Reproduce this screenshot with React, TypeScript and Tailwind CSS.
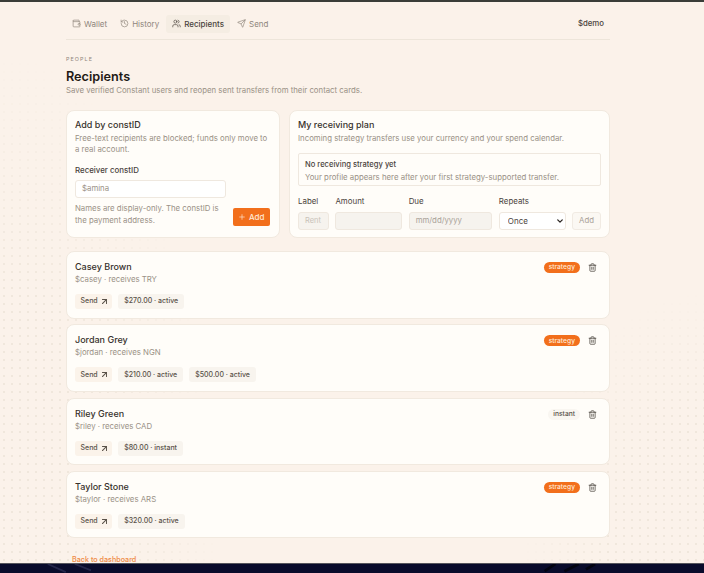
import { ArrowUpRight, ChevronDown, History, Plus, Send, Trash2, Users, Wallet } from 'lucide-react'

const navItems = [
  { label: 'Wallet', icon: Wallet, active: false },
  { label: 'History', icon: History, active: false },
  { label: 'Recipients', icon: Users, active: true },
  { label: 'Send', icon: Send, active: false },
]

const recipients = [
  { name: 'Casey Brown', sub: '$casey · receives TRY', badge: 'strategy', chips: ['$270.00 · active'] },
  { name: 'Jordan Grey', sub: '$jordan · receives NGN', badge: 'strategy', chips: ['$210.00 · active', '$500.00 · active'] },
  { name: 'Riley Green', sub: '$riley · receives CAD', badge: 'instant', chips: ['$80.00 · instant'] },
  { name: 'Taylor Stone', sub: '$taylor · receives ARS', badge: 'strategy', chips: ['$320.00 · active'] },
]

function RecipientCard({ name, sub, badge, chips }: (typeof recipients)[0]) {
  return (
    <div className="flex h-[67.5px] justify-between rounded-[8px] border border-[#f1e9df] bg-[#fffdf9] pl-2 pr-[12px] pt-[9px]">
      <div>
        <div className="text-[9px] leading-[12px] font-medium text-[#38322c]">{name}</div>
        <div className="mt-[1px] text-[7.8px] leading-[11px] text-[#9a9186]">{sub}</div>
        <div className="mt-[9px] flex gap-[6px]">
          <span className="flex h-[15px] items-center gap-[4px] rounded-[3px] bg-[#fbf3ea] px-[5.5px] text-[7px] font-medium text-[#5a5249]">
            Send
            <ArrowUpRight className="h-[5px] w-[5px]" viewBox="6 6 12 12" strokeWidth={2.6} />
          </span>
          {chips.map(chip => (
            <span key={chip} className="flex h-[15px] items-center rounded-[3px] bg-[#f8f4ee] px-[6px] text-[7px] font-medium text-[#5a5249]">
              {chip}
            </span>
          ))}
        </div>
      </div>
      <div className="flex h-[13px] items-center gap-[8px]">
        {badge === 'strategy' ? (
          <span className="flex h-[11px] items-center rounded-full bg-[#f26f1c] px-[5px] text-[6.7px] font-medium text-[#ffe9d6]">strategy</span>
        ) : (
          <span className="flex h-[11px] items-center rounded-full bg-[#f9f6f1] px-[5px] text-[6.7px] font-medium text-[#5a5249]">instant</span>
        )}
        <Trash2 className="h-[9px] w-[9px] text-[#4a443d]" strokeWidth={2} />
      </div>
    </div>
  )
}

export default function App() {
  return (
    <div className="flex h-[573px] w-[704px] flex-col overflow-hidden bg-[#fbf2ea] font-['Inter',sans-serif]">
      <div className="h-[2px] shrink-0 bg-[#3a3d38]" />
      <div className="relative min-h-0 flex-1 overflow-hidden">
        {/* dot patterns on both sides of the content */}
        <div className="absolute bottom-0 left-0 top-[50px] w-[220px] bg-[radial-gradient(circle,#f0e7dc_1px,transparent_1.2px)] bg-[length:8px_8px] [mask-image:radial-gradient(ellipse_100%_100%_at_0%_100%,black_55%,transparent_100%)]" />
        <div className="absolute bottom-0 right-0 top-[290px] w-[180px] bg-[radial-gradient(circle,#f0e7dc_1px,transparent_1.2px)] bg-[length:8px_8px] [mask-image:radial-gradient(ellipse_100%_100%_at_100%_100%,black_55%,transparent_100%)]" />
        <div className="relative ml-[66px] w-[544px]">
          <header className="flex h-[38px] items-center justify-between border-b border-[#ede5da] pt-[6px]">
            <nav className="flex items-center gap-[1px]">
              {navItems.map(item => (
                <span
                  key={item.label}
                  className={`flex h-[18px] items-center gap-[3px] rounded-[3px] px-[6px] text-[8px] ${
                    item.active ? 'bg-[#f5ede3] font-medium text-[#4a433c]' : 'text-[#8f867c]'
                  }`}
                >
                  <item.icon className="h-[9px] w-[9px]" strokeWidth={1.8} />
                  {item.label}
                </span>
              ))}
            </nav>
            <span className="pr-[6px] pt-[1px] text-[7.8px] font-medium text-[#4a433c]">$demo</span>
          </header>

          <p className="mt-[15px] text-[5.4px] leading-[8px] tracking-[0.2em] text-[#8f867c]">PEOPLE</p>
          <h1 className="mt-[5px] text-[12.7px] leading-[17px] font-semibold text-[#1f1a16]">Recipients</h1>
          <p className="text-[7.8px] leading-[11px] text-[#9a9186]">Save verified Constant users and reopen sent transfers from their contact cards.</p>

          <div className="mt-[14px] flex gap-[9px]">
            <section className="h-[128px] w-[214px] rounded-[8px] border border-[#f1e9df] bg-[#fffdf9] px-2 pt-[8px]">
              <h2 className="text-[9px] leading-[12px] font-medium text-[#38322c]">Add by constID</h2>
              <p className="mt-[2px] text-[7.8px] leading-[11px] text-[#9a9186]">Free-text recipients are blocked; funds only move to a real account.</p>
              <label className="mt-[10px] block text-[7.9px] leading-[11px] font-medium text-[#4a433c]">Receiver constID</label>
              <div className="mt-[4px] flex h-[18px] w-[151px] items-center rounded-[3px] border border-[#efe8df] bg-white px-[6px] text-[7.8px] text-[#9a9186]">$amina</div>
              <div className="mt-[4px] flex items-end justify-between">
                <p className="w-[150px] text-[7.8px] leading-[12px] text-[#9a9186]">Names are display-only. The constID is the payment address.</p>
                <span className="mr-[1px] flex h-[18px] items-center gap-[3px] rounded-[2px] bg-[#f26f1c] px-[5.5px] text-[8px] font-medium text-[#ffe9d6]">
                  <Plus className="h-[8px] w-[8px]" strokeWidth={2} />
                  Add
                </span>
              </div>
            </section>

            <section className="h-[128px] w-[321px] rounded-[8px] border border-[#f1e9df] bg-[#fffdf9] px-2 pt-[8px]">
              <h2 className="text-[9px] leading-[12px] font-medium text-[#38322c]">My receiving plan</h2>
              <p className="mt-[2px] text-[7.8px] leading-[11px] text-[#9a9186]">Incoming strategy transfers use your currency and your spend calendar.</p>
              <div className="mt-[9px] h-[33px] rounded-[2px] border border-[#efe8df] px-[6px] pt-[5px]">
                <div className="text-[7.6px] leading-[12px] font-medium text-[#4a433c]">No receiving strategy yet</div>
                <div className="text-[7.8px] leading-[12px] text-[#9a9186]">Your profile appears here after your first strategy-supported transfer.</div>
              </div>
              <div className="mt-[9px] flex gap-[6.5px]">
                <div className="w-[31px]">
                  <div className="text-[7.9px] leading-[12px] text-[#4a433c]">Label</div>
                  <div className="mt-[5px] flex h-[18px] items-center rounded-[3px] border border-[#efe8df] bg-[#f6f3ee] px-[6px] text-[7.5px] text-[#c9c2b9]">Rent</div>
                </div>
                <div className="w-[67px]">
                  <div className="text-[7.9px] leading-[12px] text-[#4a433c]">Amount</div>
                  <div className="mt-[5px] h-[18px] rounded-[3px] border border-[#efe8df] bg-[#f6f3ee]" />
                </div>
                <div className="w-[84px]">
                  <div className="text-[7.9px] leading-[12px] text-[#4a433c]">Due</div>
                  <div className="mt-[5px] flex h-[18px] items-center rounded-[3px] border border-[#efe8df] bg-[#f6f3ee] px-[6px] text-[7.8px] text-[#a9a198]">mm/dd/yyyy</div>
                </div>
                <div className="w-[67px]">
                  <div className="text-[7.9px] leading-[12px] text-[#4a433c]">Repeats</div>
                  <div className="relative mt-[5px]">
                    <select defaultValue="Once" className="block h-[18px] w-full appearance-none rounded-[3px] border border-[#efe8df] bg-white pl-[8px] text-[8px] text-[#4a433c]">
                      <option>Once</option>
                    </select>
                    <ChevronDown className="pointer-events-none absolute right-[3px] top-[6px] h-[6px] w-[6px] text-[#2c2622]" viewBox="4 6 16 12" strokeWidth={3.5} />
                  </div>
                </div>
                <div className="flex flex-col justify-end">
                  <span className="flex h-[18px] items-center rounded-[3px] border border-[#f1ebe3] bg-[#fbf8f3] px-[6px] text-[7.8px] text-[#a9a198]">Add</span>
                </div>
              </div>
            </section>
          </div>

          <div className="mt-[13px] flex flex-col gap-[5.8px]">
            {recipients.map(r => (
              <RecipientCard key={r.name} {...r} />
            ))}
          </div>

          <p className="mt-[17px] pl-[6px] text-[7.2px] leading-[10px] font-medium text-[#ef8a45]">Back to dashboard</p>
        </div>
      </div>
      <div className="relative h-[10px] shrink-0 border-t border-[#55555c] bg-[#090b2b]">
        <svg className="absolute inset-0 h-full w-full" viewBox="0 0 704 10" fill="none">
          <path d="M14 0L34 9M44 0L62 7" stroke="#24264a" strokeWidth="2" />
          <path d="M566 8L578 0M588 8L604 0M612 6L622 0" stroke="#020310" strokeWidth="3" />
        </svg>
      </div>
    </div>
  )
}
